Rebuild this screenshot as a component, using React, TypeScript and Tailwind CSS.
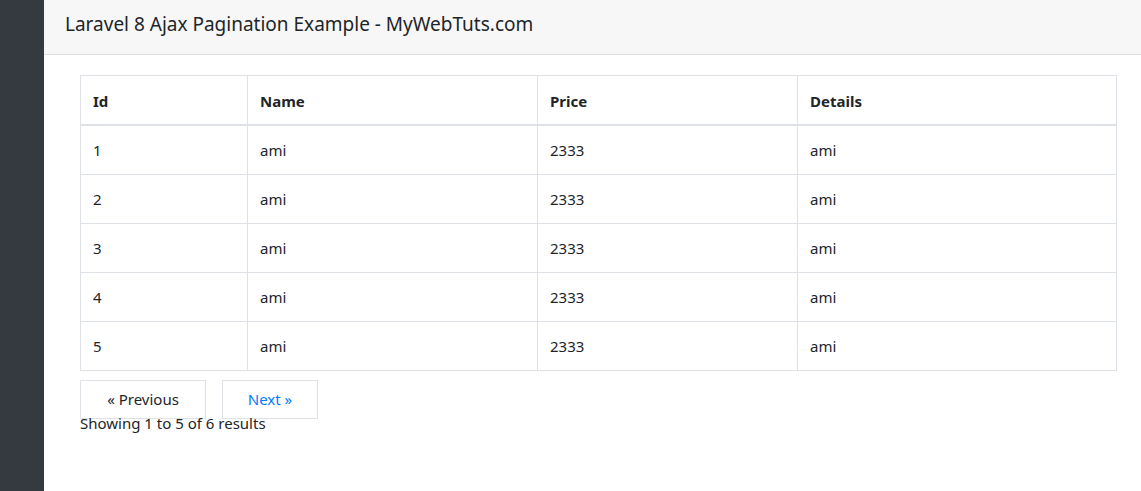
import React from "react";

const rows = [1, 2, 3, 4, 5];

export default function App() {
  return (
    <div
      className="flex min-h-[491px] w-full bg-white text-[#212529]"
      style={{ fontFamily: '"Noto Sans", "Open Sans", sans-serif' }}
    >
      <div className="w-[44px] shrink-0 bg-[#343a40]" />
      <div className="flex min-w-0 flex-1 flex-col">
        <div className="h-[55px] border-b border-[#dfdfdf] bg-[#f7f7f7] pl-[21px] pt-[12px]">
          <h1 className="text-[19px] leading-[24px] text-[#212529]">
            Laravel 8 Ajax Pagination Example - MyWebTuts.com
          </h1>
        </div>
        <div className="pl-[36px] pr-[24px] pt-[20px]">
          <table className="w-full border-collapse text-[15px] leading-[24px]">
            <colgroup>
              <col className="w-[167px]" />
              <col className="w-[290px]" />
              <col className="w-[260px]" />
              <col />
            </colgroup>
            <thead>
              <tr>
                {["Id", "Name", "Price", "Details"].map((h) => (
                  <th
                    key={h}
                    className="border border-b-2 border-[#dee2e6] px-[12px] pb-[11px] pt-[13px] text-left font-bold"
                  >
                    {h}
                  </th>
                ))}
              </tr>
            </thead>
            <tbody>
              {rows.map((r) => (
                <tr key={r}>
                  <td className="border border-[#dee2e6] px-[12px] py-[12px]">{r}</td>
                  <td className="border border-[#dee2e6] px-[12px] py-[12px]">ami</td>
                  <td className="border border-[#dee2e6] px-[12px] py-[12px]">2333</td>
                  <td className="border border-[#dee2e6] px-[12px] py-[12px]">ami</td>
                </tr>
              ))}
            </tbody>
          </table>
          <div className="mt-[9px] flex gap-[16px]">
            <div className="flex h-[39px] w-[126px] items-center justify-center border border-[#dee2e6] text-[15px] text-[#212529]">
              « Previous
            </div>
            <div className="flex h-[39px] w-[96px] items-center justify-center border border-[#dee2e6] text-[15px] text-[#007bff]">
              Next »
            </div>
          </div>
          <div className="-mt-[8px] text-[15px] leading-[24px]">Showing 1 to 5 of 6 results</div>
        </div>
      </div>
    </div>
  );
}
